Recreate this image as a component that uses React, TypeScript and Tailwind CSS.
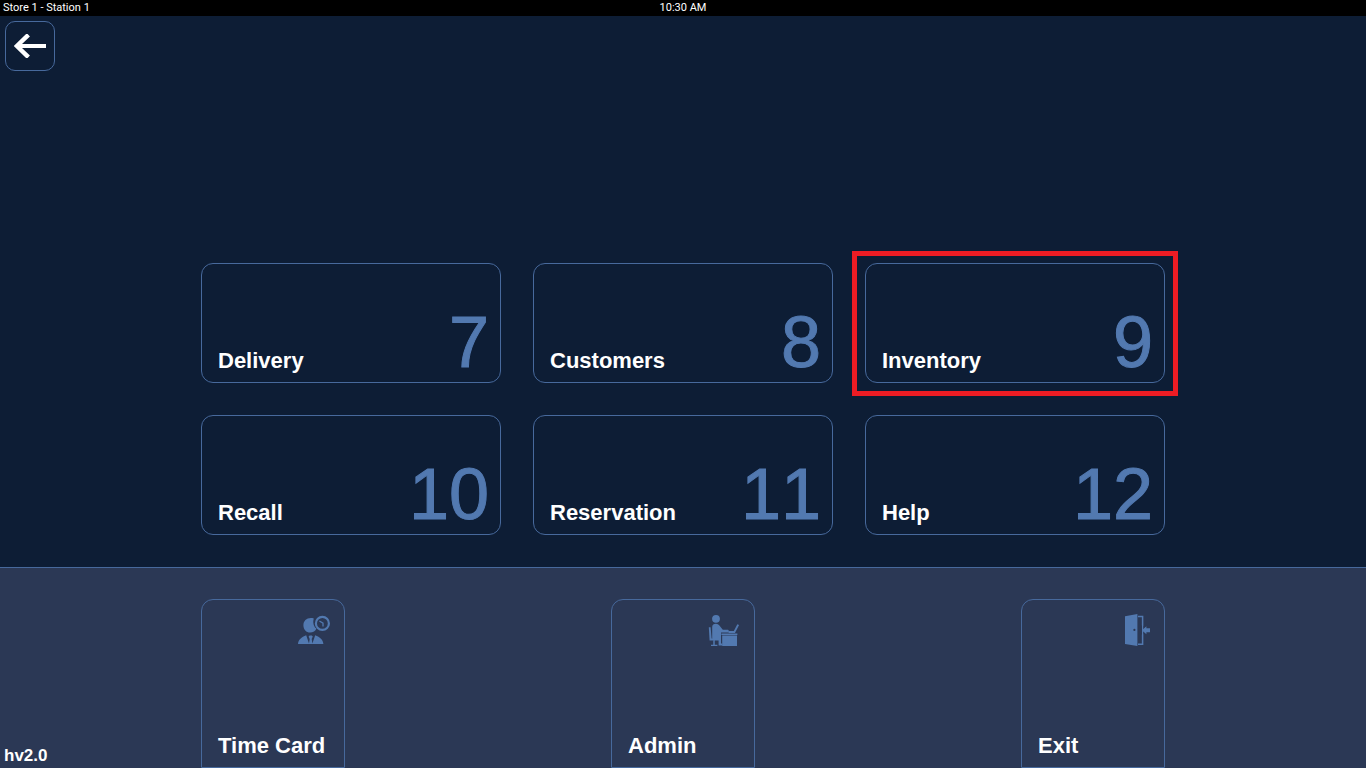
import type { ReactNode } from "react";

const menuItems = [
  { label: "Delivery", number: 7 },
  { label: "Customers", number: 8 },
  { label: "Inventory", number: 9, highlighted: true },
  { label: "Recall", number: 10 },
  { label: "Reservation", number: 11 },
  { label: "Help", number: 12 },
];

function TimeCardIcon() {
  return (
    <svg viewBox="0 0 32 32" className="w-8 h-8" fill="currentColor" aria-hidden="true">
      <path d="M15.8 4.4C9.6 2.8 5.4 6.4 5.4 11.2C5.4 15.6 8.4 18.6 12 18.6C15 18.6 17.6 17 18.4 14.6C15.6 12.4 14.6 8.2 15.8 4.4Z" />
      <path d="M0 30C.3 25.5 3.5 23 8.2 21.2L11 29.4L11.7 25L10.6 22.6L11.6 21.6H13.8L14.8 22.6L13.7 25L14.4 29.4L17.2 21.2C22 23 25 25.5 25.4 30Z" />
      <circle cx="24.4" cy="9.4" r="6.5" fill="none" stroke="currentColor" strokeWidth="2.2" />
      <path d="M21.4 7L25 9.2V12.6" fill="none" stroke="currentColor" strokeWidth="1.3" />
    </svg>
  );
}

function AdminIcon() {
  return (
    <svg viewBox="0 0 32 32" className="w-8 h-8" fill="currentColor" aria-hidden="true">
      <circle cx="8" cy="4.8" r="3.9" />
      <path d="M4.2 13C4.2 10.8 5.8 9.8 7.8 9.8C9.8 9.8 11 10.8 12 12.2L14.8 15.8H19.4C21.4 15.8 21.4 18.6 19.4 18.6H13V29.6H14.4V31.4H10.6V26.4H6.4C5 26.4 4.2 25.6 4.2 24Z" />
      <path d="M.8 13.2H2.6L3.6 24.6H5V26.4H1.6Z" />
      <path d="M6 26V31.4M3 31.6H9.4" fill="none" stroke="currentColor" strokeWidth="1.5" />
      <path d="M20.4 18H26.4L30.2 10.6" fill="none" stroke="currentColor" strokeWidth="1.9" />
      <path d="M13.4 19.4H29.4V21H13.4ZM14.2 21.6H29V32.6H14.2Z" />
    </svg>
  );
}

function ExitIcon() {
  return (
    <svg viewBox="0 0 32 32" className="w-8 h-8" fill="currentColor" aria-hidden="true">
      <path fillRule="evenodd" d="M7 2.2L19.4 0V32L7 30ZM16.4 14.8A1.1 1.1 0 1 0 16.4 17A1.1 1.1 0 1 0 16.4 14.8Z" />
      <path d="M20 2.6H24.6V11.6M24.6 20.6V30.2H20" fill="none" stroke="currentColor" strokeWidth="1.5" />
      <path d="M24.6 11V21" fill="none" stroke="currentColor" strokeWidth="1.2" />
      <path d="M23.8 16.2L28.4 12.2V14.2H32V18.2H28.4V20.2Z" />
    </svg>
  );
}

const footerItems: { label: string; icon: ReactNode }[] = [
  { label: "Time Card", icon: <TimeCardIcon /> },
  { label: "Admin", icon: <AdminIcon /> },
  { label: "Exit", icon: <ExitIcon /> },
];

function Label({ children }: { children: ReactNode }) {
  return <span className="text-[22px] leading-7 font-bold text-white">{children}</span>;
}

export default function App() {
  return (
    <div className="min-h-screen flex flex-col bg-[#0d1d35] text-white font-['Liberation_Sans',sans-serif] select-none">
      <header className="h-4 px-[3px] grid grid-cols-3 items-center bg-black text-[11px] leading-4 font-['Roboto',sans-serif]">
        <span>Store 1 - Station 1</span>
        <span className="text-center">10:30 AM</span>
      </header>

      <main className="flex-1 flex flex-col justify-between pt-[5px] pb-8">
        <button
          type="button"
          aria-label="Back"
          className="ml-[5px] w-[50px] h-[50px] flex items-center justify-center rounded-[10px] border border-[#47699c]"
        >
          <svg viewBox="0 0 32 24" className="w-8 h-6" fill="none" stroke="white" aria-hidden="true">
            <path d="M2 12H32" strokeWidth="4" />
            <path d="M14.4 .8L2.8 12L14.4 23.2" strokeWidth="4.4" />
          </svg>
        </button>

        <div className="w-full max-w-[964px] mx-auto grid grid-cols-3 gap-8">
          {menuItems.map((item) => (
            <div key={item.label} className="relative">
              <button
                type="button"
                className="w-full h-[120px] pl-4 pr-[11px] flex items-end justify-between rounded-xl border border-[#47699c]"
              >
                <span className="pb-[7px]">
                  <Label>{item.label}</Label>
                </span>
                <span className="text-[72px] leading-[80px] text-[#5279b0] [font-kerning:none] [-webkit-text-stroke:1px_#5279b0]">
                  {item.number}
                </span>
              </button>
              {item.highlighted && (
                <span className="absolute -inset-x-[13px] -top-3 -bottom-[13px] border-5 border-[#ed1c24] pointer-events-none" />
              )}
            </div>
          ))}
        </div>
      </main>

      <footer className="grid grid-cols-[1fr_minmax(0,964px)_1fr] border-t border-[#47699c] bg-[#2b3855] pt-[31px]">
        <span className="self-end pl-1 pb-[3px] text-[17px] leading-[18px] font-bold">hv2.0</span>
        <div className="flex justify-between">
          {footerItems.map((item) => (
            <button
              key={item.label}
              type="button"
              className="w-36 h-[169px] pt-[14px] pb-[7px] pl-4 pr-[14px] flex flex-col justify-between rounded-t-xl border border-[#47699c] text-left whitespace-nowrap"
            >
              <span className="self-end text-[#5279b0]">{item.icon}</span>
              <Label>{item.label}</Label>
            </button>
          ))}
        </div>
      </footer>
    </div>
  );
}
